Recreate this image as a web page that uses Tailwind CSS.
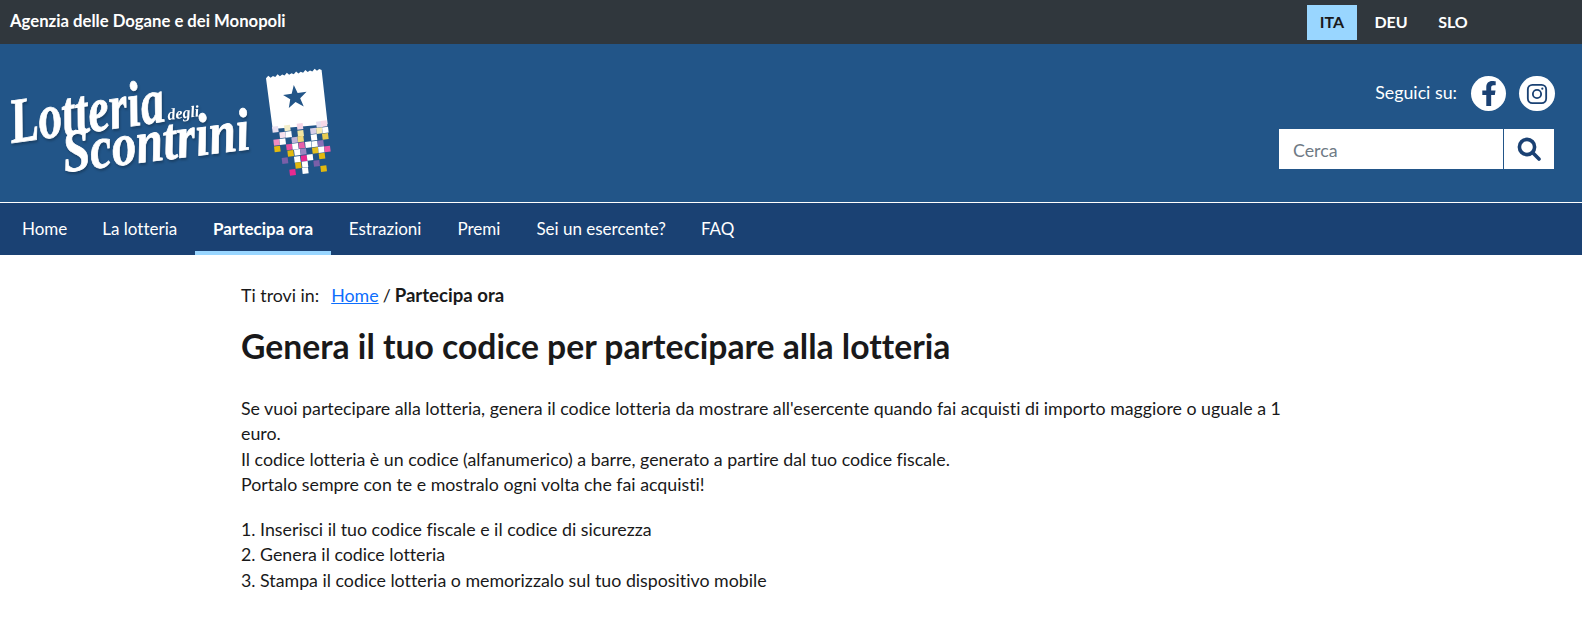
<!DOCTYPE html>
<html lang="it">
<head>
    <meta charset="UTF-8">
    <meta name="viewport" content="width=device-width, initial-scale=1.0">
    <title>Partecipa ora - Lotteria degli Scontrini</title>
    <script src="https://cdn.jsdelivr.net/npm/@tailwindcss/browser@4"></script>
</head>
<body class="bg-white text-[#19191a] font-['Lato',sans-serif] [font-variant-ligatures:none] overflow-hidden">
    <!-- barra agenzia -->
    <div class="h-[44px] bg-[#30373d] flex items-center justify-between pl-[10px]">
        <a class="text-white font-bold text-[16.7px]">Agenzia delle Dogane e dei Monopoli</a>
        <div class="flex items-center mr-[101px] text-[16px] font-bold">
            <a class="w-[50px] h-[35px] bg-[#99d6ff] text-[#19191a] flex items-center justify-center">ITA</a>
            <a class="w-[68px] h-[35px] text-white flex items-center justify-center">DEU</a>
            <a class="w-[56px] h-[35px] text-white flex items-center justify-center">SLO</a>
        </div>
    </div>

    <!-- testata -->
    <header class="h-[158px] bg-[#225588] flex justify-between pl-[10px] pr-[27px]">
        <div class="flex items-start pt-[21px]">
            <svg width="240" height="120" viewBox="0 0 240 120" class="block mt-[8px] overflow-visible [filter:drop-shadow(1px_2px_1px_rgba(0,0,0,0.25))]">
                <text transform="translate(2 70) rotate(-8)" fill="#fff" stroke="#fff" stroke-width="0.8" font-family="Liberation Serif" font-weight="700" font-style="italic" font-size="64" textLength="156" lengthAdjust="spacingAndGlyphs">Lotteria</text>
                <text transform="translate(158 47) rotate(-7)" fill="#fff" font-family="Liberation Serif" font-weight="700" font-style="italic" font-size="16">degli</text>
                <text transform="translate(55 99) rotate(-7)" fill="#fff" stroke="#fff" stroke-width="0.8" font-family="Liberation Serif" font-weight="700" font-style="italic" font-size="60" textLength="188" lengthAdjust="spacingAndGlyphs">Scontrini</text>
            </svg>
            <svg id="ticket" width="80" height="115" viewBox="0 0 240 345" class="block ml-[10px]"></svg>
        </div>
        <div class="flex flex-col items-end pt-[32px]">
            <div class="flex items-center text-white text-[17.8px]">
                <span class="mr-[14px] -mt-[2px]">Seguici su:</span>
                <a class="w-[35px] h-[35px] rounded-full bg-white flex items-center justify-center">
                    <svg width="22" height="25" viewBox="0 0 320 512" fill="#1a4173"><path d="M279.14 288l14.22-92.66h-88.91v-60.13c0-25.35 12.42-50.06 52.24-50.06h40.42V6.26S260.43 0 225.36 0c-73.22 0-121.08 44.38-121.08 124.72v70.62H22.89V288h81.39v224h100.17V288z"/></svg>
                </a>
                <a class="w-[36px] h-[35px] rounded-full bg-white flex items-center justify-center ml-[13px]">
                    <svg width="22" height="22" viewBox="0 0 24 24" fill="none" stroke="#1a4173" stroke-width="2"><rect x="2" y="2" width="20" height="20" rx="5"/><circle cx="12" cy="12" r="4.5"/><circle cx="17.8" cy="6.2" r="1.2" fill="#1a4173" stroke="none"/></svg>
                </a>
            </div>
            <div class="flex mt-[18px] mr-[1px] h-[40px] bg-white">
                <input type="text" placeholder="Cerca" class="w-[224px] pl-[14px] pt-[3px] text-[17.8px] outline-none placeholder:text-[#6f7a85]">
                <div class="w-[1px] bg-[#225588]"></div>
                <button class="w-[50px] flex items-center justify-center">
                    <svg width="24" height="24" viewBox="0 0 24 24" fill="none" stroke="#1a4173" stroke-width="3.6"><circle cx="10" cy="10" r="7.6"/><path d="M15.8 15.8 22 22" stroke-linecap="round"/></svg>
                </button>
            </div>
        </div>
    </header>

    <!-- menu -->
    <nav class="h-[53px] bg-[#1a4173] border-t border-white flex pl-[4.5px] text-white text-[17px]">
        <a class="px-[17.5px] pt-[4px] flex items-center border-b-[4px] border-transparent">Home</a>
        <a class="px-[17.5px] pt-[4px] flex items-center border-b-[4px] border-transparent">La lotteria</a>
        <a class="px-[18.25px] pt-[4px] flex items-center border-b-[4px] border-[#99d6ff] font-bold">Partecipa ora</a>
        <a class="px-[17.5px] pt-[4px] flex items-center border-b-[4px] border-transparent">Estrazioni</a>
        <a class="px-[18.5px] pt-[4px] flex items-center border-b-[4px] border-transparent">Premi</a>
        <a class="px-[17.5px] pt-[4px] flex items-center border-b-[4px] border-transparent">Sei un esercente?</a>
        <a class="px-[17.5px] pt-[4px] flex items-center border-b-[4px] border-transparent">FAQ</a>
    </nav>

    <!-- contenuto -->
    <main class="ml-[241px] pt-[28px] w-[1060px] text-[17.8px] leading-[25.5px]">
        <p class="flex">
            <span class="mr-[12px]">Ti trovi in:</span>
            <a class="text-[#0d6efd] underline">Home</a>
            <span class="mx-[4px]">/</span>
            <strong class="font-bold text-[18.6px]">Partecipa ora</strong>
        </p>
        <h1 class="text-[33.7px] leading-[40px] font-bold mt-[17px] mb-[30px]">Genera il tuo codice per partecipare alla lotteria</h1>
        <p class="mb-[19px]">
            Se vuoi partecipare alla lotteria, genera il codice lotteria da mostrare all'esercente quando fai acquisti di importo maggiore o uguale a 1 euro.<br>
            Il codice lotteria è un codice (alfanumerico) a barre, generato a partire dal tuo codice fiscale.<br>
            Portalo sempre con te e mostralo ogni volta che fai acquisti!
        </p>
        <p>
            1. Inserisci il tuo codice fiscale e il codice di sicurezza<br>
            2. Genera il codice lotteria<br>
            3. Stampa il codice lotteria o memorizzalo sul tuo dispositivo mobile
        </p>
    </main>

    <script>
        // quadratini dello scontrino: x, y, colore
        const pixels = [
            [46,193,'#e8e0f0'],[82,189,'#f3edc8'],[120,184,'#f5d5e5'],[178,178,'#e6dff0'],[192,176,'#f7d9e8'],
            [68,210,'#f6e0ec'],[86,208,'#ffffff'],[122,205,'#f0e6a0'],[160,198,'#d8d0e8'],[178,197,'#f5eab0'],[196,195,'#ffffff'],
            [50,232,'#f08cc0'],[68,230,'#ffffff'],[104,225,'#c0b4d8'],[122,222,'#eed878'],[162,217,'#ffffff'],[196,214,'#e8cc50'],
            [52,252,'#e3b90e'],[88,246,'#e8509f'],[106,244,'#ffffff'],[125,241,'#e860a8'],[145,239,'#ffffff'],[164,237,'#ffffff'],[182,235,'#8a72b8'],
            [92,265,'#e3b90e'],[112,262,'#ffffff'],[130,260,'#9a85c0'],[166,256,'#e3c020'],[184,254,'#ffffff'],[202,252,'#ea5aa8'],
            [75,287,'#7a5fa8'],[112,283,'#ffffff'],[132,280,'#e82a90'],[150,277,'#ffffff'],[186,273,'#e3b90e'],
            [115,301,'#e3b90e'],[135,298,'#ffffff'],[170,295,'#7a5fa8'],
            [98,322,'#e82a90'],[136,317,'#ffffff'],[191,311,'#e3b90e']
        ];
        let teeth = '18,40';
        for (let i = 1; i <= 12; i++) {
            const x = 18 + i * 13.9, y = 40 - i * 2.08;
            teeth += ` ${x - 7},${y - (i % 2 ? 6 : 3)} ${x},${y}`;
        }
        const squares = pixels.map(p => `<rect x="${p[0]-9}" y="${p[1]-9}" width="18" height="18" fill="${p[2]}" transform="rotate(-7 ${p[0]} ${p[1]})"/>`).join('');
        document.getElementById('ticket').innerHTML =
            `<polygon points="${teeth} 203,178 38,192" fill="#fff"/>` +
            `<polygon points="105,60 114,85 141,84 120,101 128,127 105,111 83,127 90,101 70,86 96,85" fill="#225588" transform="rotate(-6 105 95)"/>` +
            squares;
    </script>
</body>
</html>
